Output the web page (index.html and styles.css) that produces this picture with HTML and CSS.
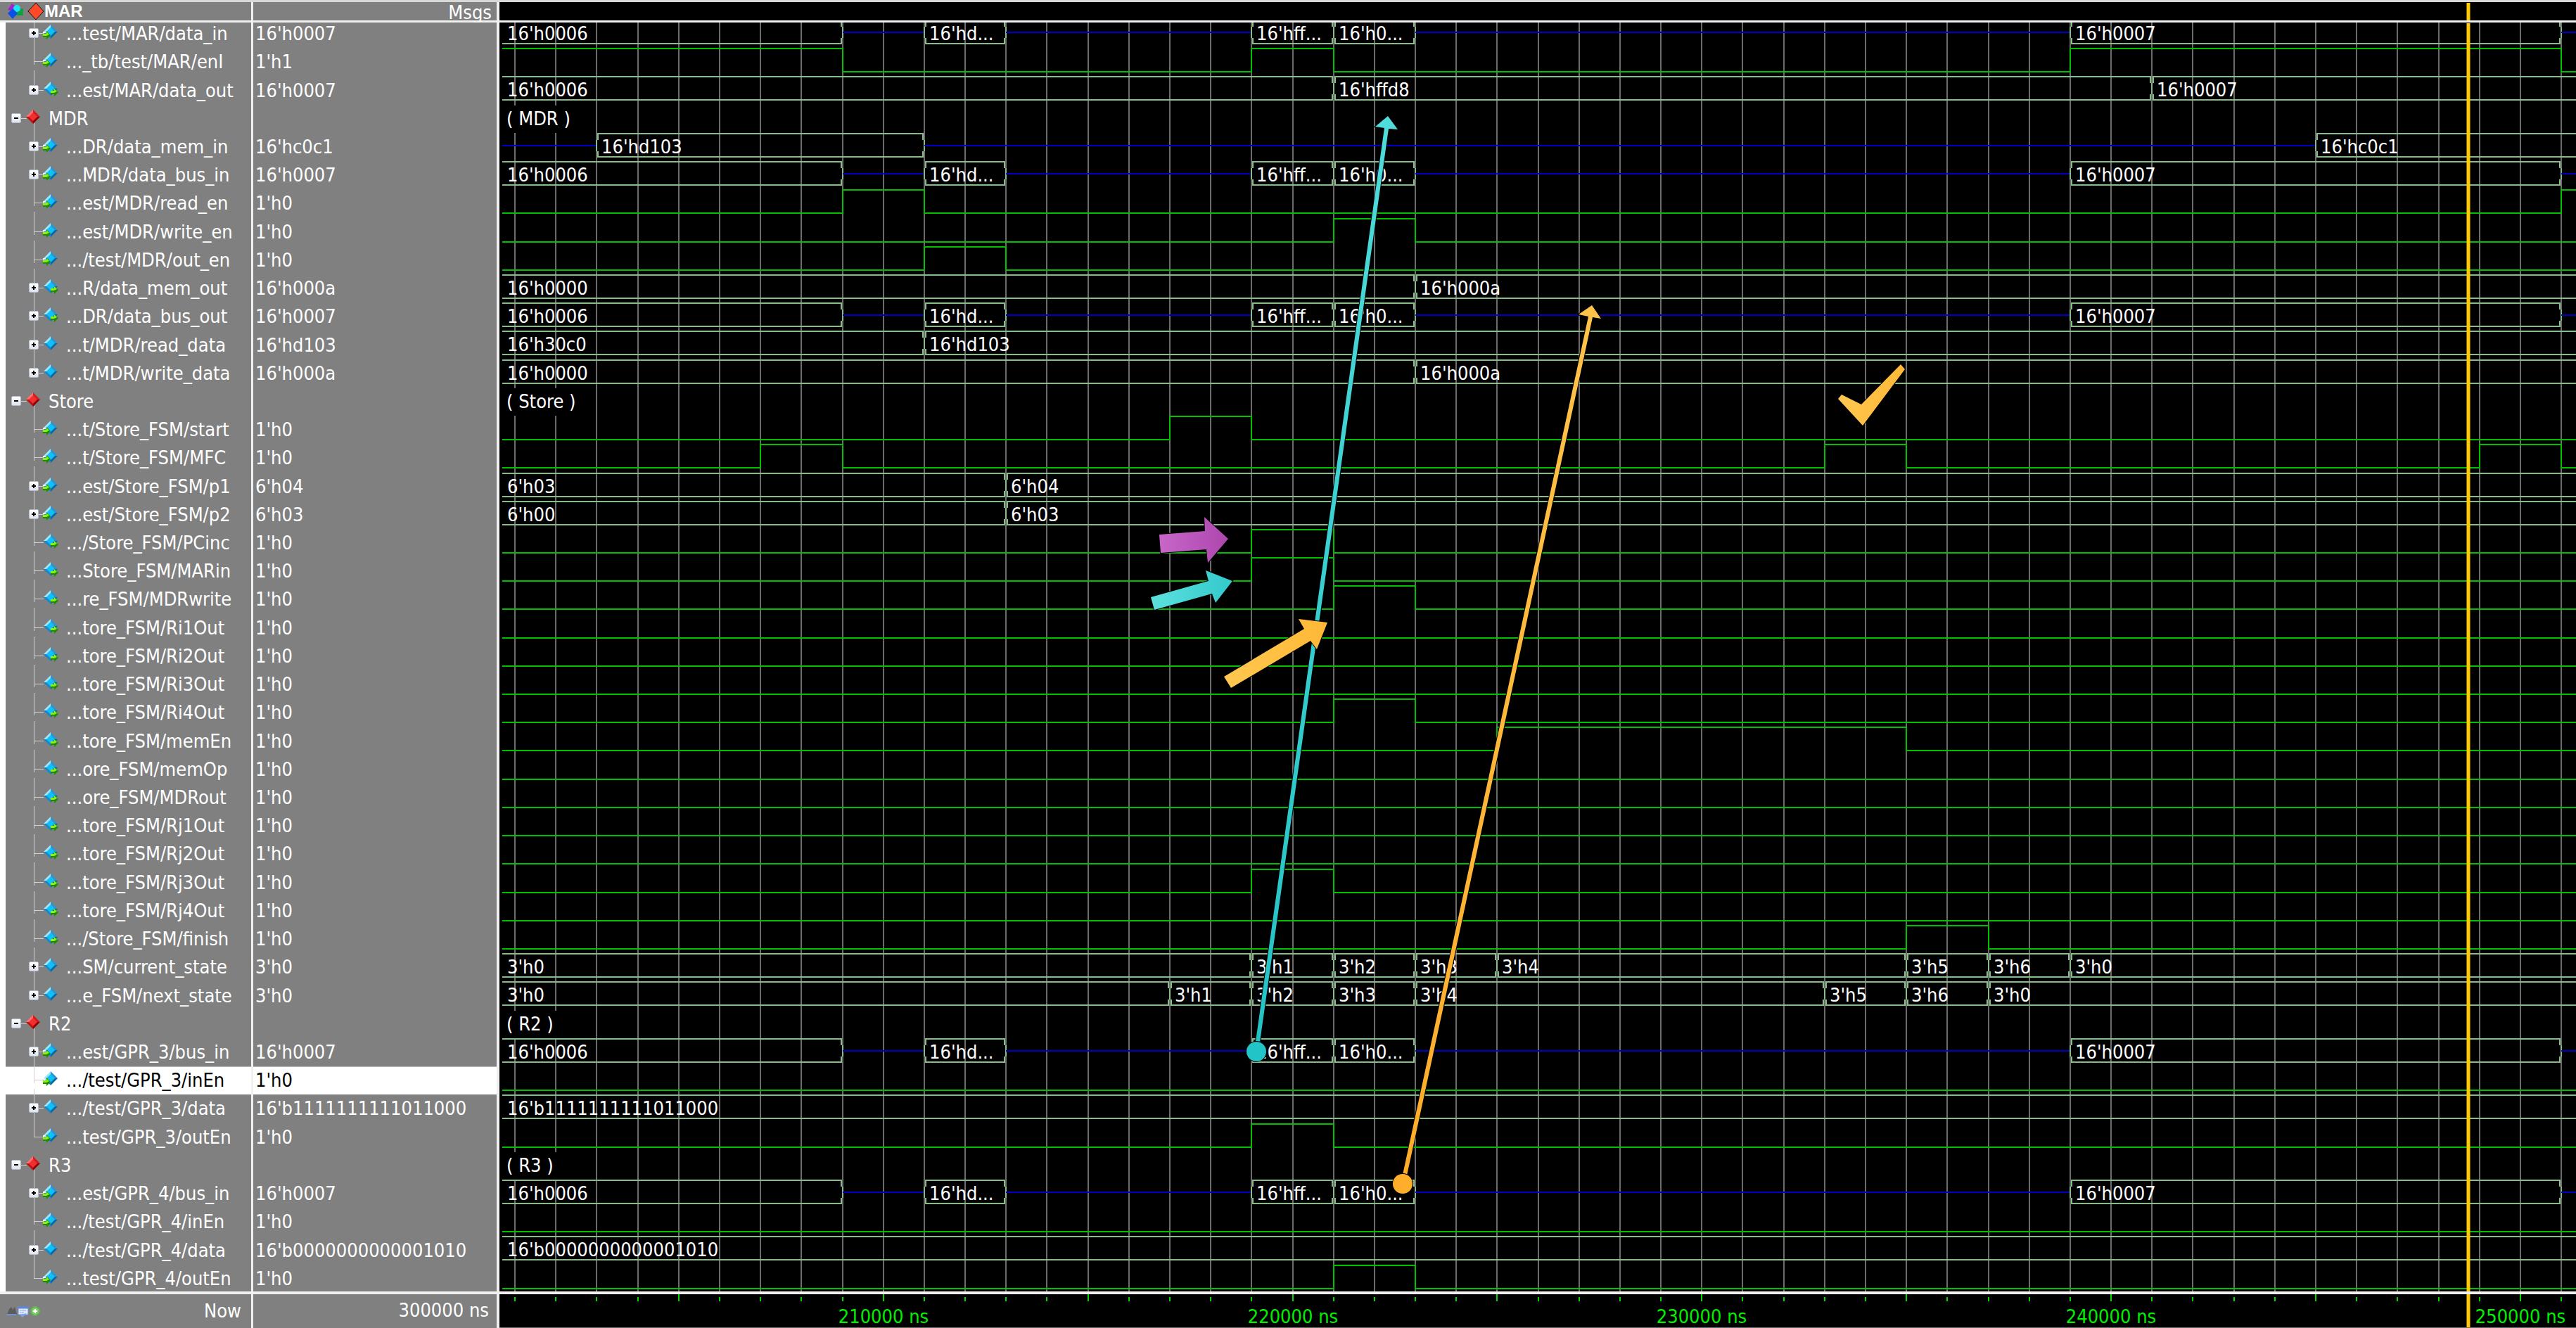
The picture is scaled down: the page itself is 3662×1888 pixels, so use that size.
FILE: index.html
```html
<!DOCTYPE html>
<html lang="en">
<head>
<meta charset="utf-8">
<title>Wave</title>
<link rel="stylesheet" href="styles.css">
</head>
<body>
<main class="wave">
  <header class="bar bar-top">
    <div class="col-name title">
      <svg class="title-icons" width="54" height="26" viewBox="0 0 54 26" aria-hidden="true">
        <path d="M2 11 8 2l8 6-5 5z" fill="#a81ed0"/>
        <path d="M15 9h9v10H14z" fill="#12a047"/>
        <circle cx="15" cy="9" r="5" fill="#19e4f4"/>
        <path d="m9 9 7 7-7 8-7-8z" fill="#0a50e6"/>
        <path d="m30 13 6-3v6z" fill="#1a1a1a"/>
        <path d="m42 1 11 12-11 12-11-12z" fill="#ff4a28" stroke="#111" stroke-width="1"/>
      </svg>
      <h1 class="title-text">MAR</h1>
    </div>
    <div class="col-value head-value">Msgs</div>
    <svg class="col-wave" id="top-strip" aria-hidden="true"></svg>
  </header>

  <section class="panes">
    <table class="signals" aria-label="Signals">
      <tbody id="signal-rows"></tbody>
    </table>
    <svg class="col-wave" id="plot" role="img" aria-label="Waveforms"></svg>
  </section>

  <footer class="bar bar-bottom">
    <div class="col-name now">
      <svg width="50" height="18" viewBox="0 0 50 18" aria-hidden="true">
        <path d="m1 14 3-8 3-3 2 4 3-4 3 11z" fill="#5c5c5c"/>
        <path d="M1 14h13" stroke="#6d93cf" stroke-width="2"/>
        <rect x="17" y="3" width="14" height="11" fill="#dfe8f8" stroke="#6a93dc"/>
        <path d="M17 4h14" stroke="#5b87d8" stroke-width="3"/>
        <path d="M19 8h9M19 11h6" stroke="#8ea9d8"/>
        <path d="m19 14 4 4 6-6z" fill="#7da3e6"/>
        <circle cx="41" cy="9" r="7" fill="#62b34f"/>
        <circle cx="41" cy="9" r="5" fill="#86cc74"/>
        <path d="M41 6v6M38 9h6" stroke="#fff" stroke-width="2"/>
      </svg>
      <span>Now</span>
    </div>
    <div class="col-value now-value">300000 ns</div>
    <svg class="col-wave" id="timeline" aria-label="Timeline"></svg>
  </footer>
</main>
<script src="wave.js"></script>
</body>
</html>
```

FILE: styles.css
```css
* { box-sizing: border-box; }

:root {
  --name-width: 360px;
  --value-width: 350px;
  --panel: #808080;
  --rule: #f0f0f0;
}

body {
  margin: 0;
  background: #000;
  color: #fff;
  font-family: "DejaVu Sans Condensed", "Noto Sans", sans-serif;
  font-size: 27px;
  line-height: 40px;
}

.wave {
  display: flex;
  flex-direction: column;
  height: 100vh;
}

.bar { display: flex; flex: none; background: #000; }
.bar-top {
  height: 32px;
  border-top: 3px solid #d8d8d8;
  border-bottom: 3px solid var(--rule);
}
.bar-bottom {
  height: 52px;
  border-top: 4px solid var(--rule);
}

.col-name,
.col-value { flex: none; background: var(--panel); }
.col-name { width: var(--name-width); border-right: 3px solid var(--rule); }
.col-value { width: var(--value-width); border-right: 4px solid var(--rule); }
.col-wave { display: block; flex: 1; min-width: 0; height: 100%; }

.title { display: flex; align-items: center; padding-left: 9px; }
.title-text {
  margin: 0;
  font: bold 24px/24px "Liberation Sans", sans-serif;
}
.head-value {
  padding-right: 7px;
  text-align: right;
  line-height: 30px;
}

.panes { position: relative; display: flex; flex: 1; min-height: 0; overflow: hidden; }

.signals {
  flex: none;
  width: calc(var(--name-width) + var(--value-width));
  height: calc(100% + 6px);
  margin-top: -4px;
  table-layout: fixed;
  border-collapse: separate;
  border-spacing: 0;
  background: var(--panel);
}
.signals th,
.signals td { padding: 0; text-align: left; font-weight: normal; white-space: nowrap; }
.signals th {
  width: var(--name-width);
  border-left: 8px solid #fff;
  border-right: 3px solid var(--rule);
}
.signals td { padding-left: 3px; border-right: 4px solid var(--rule); }
.signals .selected { background: #fff; color: #000; }
.signals .selected th,
.signals .selected td { box-shadow: inset 0 1px #b8b8b8; }

.node { display: grid; grid-template-columns: 86px 1fr; height: 40px; }
.node-group { grid-template-columns: 61px 1fr; }
.tree { grid-area: 1 / 1; display: block; overflow: visible; }
.label { grid-area: 1 / 2; }

.toggle {
  grid-area: 1 / 1;
  display: grid;
  place-items: center;
  width: 14px;
  height: 14px;
  margin: 12px 0 0 33px;
  padding: 0;
  border: 1px solid #b4bccb;
  border-radius: 2px;
  background: linear-gradient(#fff, #dfe3ee);
}
.node-group .toggle { margin-left: 8px; }

.branch { stroke: #d0d0d0; stroke-width: 1; fill: none; shape-rendering: crispEdges; }

.now {
  display: flex;
  align-items: center;
  justify-content: space-between;
  padding: 0 14px 0 9px;
}
.now-value { padding-right: 11px; text-align: right; line-height: 46px; }

.gridline { stroke: #6c6c6c; stroke-width: 2; }
.bit { stroke: #00c000; stroke-width: 2; fill: none; }
.bus { stroke: #88bc88; stroke-width: 2; fill: none; }
.floating { stroke: #0000c4; stroke-width: 2; }
.cursor { stroke: #ffc800; stroke-width: 5; }
.tick { stroke: #00d800; stroke-width: 2; }
.value-text { fill: #fff; }
.mask { fill: #000; }
.time-text { fill: #00f000; text-anchor: middle; }
.note { stroke: #000; stroke-width: 2; paint-order: stroke; }
```

FILE: wave.js
```js
const T_START = 200.62;
const T_END = 251.36;
const CURSOR = 248.73;
const DATA_BUS = [
  [200, "16'h0006"], [209, null], [211, "16'hd..."], [213, null],
  [219, "16'hff..."], [221, "16'h0..."], [223, null], [239, "16'h0007"], [251, null],
];

// Each bit lists its toggle times; it begins low unless `high` is set.
const group = (name) => ({ kind: "group", name });
const bit = (name, value, port, toggles = [], high = false) =>
  ({ kind: "bit", name, value, port, toggles, high });
const bus = (name, value, port, spans) => ({ kind: "bus", name, value, port, spans });

const rows = [
  bus("...test/MAR/data_in", "16'h0007", "in", DATA_BUS),
  bit("..._tb/test/MAR/enI", "1'h1", "in", [209, 219, 221, 239, 251], true),
  bus("...est/MAR/data_out", "16'h0007", "out", [[200, "16'h0006"], [221, "16'hffd8"], [241, "16'h0007"]]),
  group("MDR"),
  bus("...DR/data_mem_in", "16'hc0c1", "in", [[200, null], [203, "16'hd103"], [211, null], [245, "16'hc0c1"]]),
  bus("...MDR/data_bus_in", "16'h0007", "in", DATA_BUS),
  bit("...est/MDR/read_en", "1'h0", "in", [209, 211, 251]),
  bit("...est/MDR/write_en", "1'h0", "in", [221, 223]),
  bit(".../test/MDR/out_en", "1'h0", "in", [211, 213]),
  bus("...R/data_mem_out", "16'h000a", "out", [[200, "16'h0000"], [223, "16'h000a"]]),
  bus("...DR/data_bus_out", "16'h0007", "out", DATA_BUS),
  bus("...t/MDR/read_data", "16'hd103", "", [[200, "16'h30c0"], [211, "16'hd103"]]),
  bus("...t/MDR/write_data", "16'h000a", "", [[200, "16'h0000"], [223, "16'h000a"]]),
  group("Store"),
  bit("...t/Store_FSM/start", "1'h0", "in", [217, 219]),
  bit("...t/Store_FSM/MFC", "1'h0", "in", [207, 209, 233, 235, 249, 251]),
  bus("...est/Store_FSM/p1", "6'h04", "in", [[200, "6'h03"], [213, "6'h04"]]),
  bus("...est/Store_FSM/p2", "6'h03", "in", [[200, "6'h00"], [213, "6'h03"]]),
  bit(".../Store_FSM/PCinc", "1'h0", "out", [219, 221]),
  bit("...Store_FSM/MARin", "1'h0", "out", [219, 221]),
  bit("...re_FSM/MDRwrite", "1'h0", "out", [221, 223]),
  bit("...tore_FSM/Ri1Out", "1'h0", "out"),
  bit("...tore_FSM/Ri2Out", "1'h0", "out"),
  bit("...tore_FSM/Ri3Out", "1'h0", "out"),
  bit("...tore_FSM/Ri4Out", "1'h0", "out", [221, 223]),
  bit("...tore_FSM/memEn", "1'h0", "out", [225, 235]),
  bit("...ore_FSM/memOp", "1'h0", "out"),
  bit("...ore_FSM/MDRout", "1'h0", "out"),
  bit("...tore_FSM/Rj1Out", "1'h0", "out"),
  bit("...tore_FSM/Rj2Out", "1'h0", "out"),
  bit("...tore_FSM/Rj3Out", "1'h0", "out", [219, 221]),
  bit("...tore_FSM/Rj4Out", "1'h0", "out"),
  bit(".../Store_FSM/finish", "1'h0", "out", [235, 237]),
  bus("...SM/current_state", "3'h0", "", [[200, "3'h0"], [219, "3'h1"], [221, "3'h2"], [223, "3'h3"], [225, "3'h4"], [235, "3'h5"], [237, "3'h6"], [239, "3'h0"]]),
  bus("...e_FSM/next_state", "3'h0", "", [[200, "3'h0"], [217, "3'h1"], [219, "3'h2"], [221, "3'h3"], [223, "3'h4"], [233, "3'h5"], [235, "3'h6"], [237, "3'h0"]]),
  group("R2"),
  bus("...est/GPR_3/bus_in", "16'h0007", "in", DATA_BUS),
  { ...bit(".../test/GPR_3/inEn", "1'h0", "in"), selected: true },
  bus(".../test/GPR_3/data", "16'b1111111111011000", "", [[200, "16'b1111111111011000"]]),
  bit("...test/GPR_3/outEn", "1'h0", "in", [219, 221]),
  group("R3"),
  bus("...est/GPR_4/bus_in", "16'h0007", "in", DATA_BUS),
  bit(".../test/GPR_4/inEn", "1'h0", "in"),
  bus(".../test/GPR_4/data", "16'b0000000000001010", "", [[200, "16'b0000000000001010"]]),
  bit("...test/GPR_4/outEn", "1'h0", "in", [221, 223]),
];

function gem(cx, cy, c) {
  const f = (points, fill) => `<polygon points="${points}" fill="${fill}"/>`;
  return f(`${cx},${cy - 10} ${cx - 10},${cy} ${cx - 5},${cy} ${cx},${cy - 5}`, c[0]) +
    f(`${cx},${cy - 10} ${cx + 10},${cy} ${cx + 5},${cy} ${cx},${cy - 5}`, c[1]) +
    f(`${cx},${cy + 10} ${cx + 10},${cy} ${cx + 5},${cy} ${cx},${cy + 5}`, c[2]) +
    f(`${cx},${cy + 10} ${cx - 10},${cy} ${cx - 5},${cy} ${cx},${cy + 5}`, c[3]) +
    f(`${cx},${cy - 6} ${cx + 6},${cy} ${cx},${cy + 6} ${cx - 6},${cy}`, c[4]);
}

function portArrow(port) {
  if (!port) return "";
  const x = port === "in" ? 53 : 64;
  return `<path d="M${x} 20h5v-4l6 6-6 6v-3h-5z" fill="#1c8c00"/>` +
    `<path d="M${x} 20h5v-3l4 4-4 2h-5z" fill="#8ef010"/>` +
    (port === "in" ? `<path d="M${x} 17h4v2h-4z" fill="#e8f8ff"/>` : "");
}

function tree(row, last) {
  if (row.kind === "group") {
    return `<svg class="tree" width="61" height="40" aria-hidden="true">
      <path class="branch" d="M22 19.5H30M40.5 26V41"/>${gem(39, 17, ["#ff7070", "#d81818", "#8c0000", "#c01010", "#f03030"])}</svg>`;
  }
  let d = "M40 19.5H54";
  if (last) d += "M40.5 0V20";
  else if (row.kind === "bus") d += "M40.5 0V41";
  else d += "M40.5 0V24M40.5 32V41";
  return `<svg class="tree" width="86" height="40" aria-hidden="true">
    <path class="branch" d="${d}"/>${gem(64, 17, ["#a4e4fa", "#2a96d0", "#0868a4", "#1488c8", "#10c0fa"])}${portArrow(row.port)}</svg>`;
}

function toggle(row) {
  if (row.kind === "bit") return "";
  const d = row.kind === "group" ? "M2 5H8" : "M2 5H8M5 2V8";
  const label = row.kind === "group" ? "Collapse" : "Expand";
  return `<button class="toggle" type="button" aria-label="${label} ${row.name}">
    <svg width="10" height="10" aria-hidden="true"><path d="${d}" stroke="#000" stroke-width="2"/></svg></button>`;
}

const tbody = document.getElementById("signal-rows");
tbody.innerHTML = rows.map((row, i) => {
  const last = !rows[i + 1] || rows[i + 1].kind === "group";
  return `<tr class="${row.selected ? "selected" : ""}">
    <th scope="row"><div class="node ${row.kind === "group" ? "node-group" : ""}">
      ${tree(row, last)}${toggle(row)}<span class="label">${row.name}</span></div></th>
    <td>${row.value || ""}</td></tr>`;
}).join("");

const plot = document.getElementById("plot");
const strip = document.getElementById("top-strip");
const timeline = document.getElementById("timeline");
const LEFT = 4;

function busPath(a, b, y, openLeft, openRight) {
  const top = y + 1, bottom = y + 34;
  let d = `M${openLeft ? a : a + 2} ${top}H${openRight ? b : b - 2}`;
  d += `M${openLeft ? a : a + 2} ${bottom}H${openRight ? b : b - 2}`;
  if (!openLeft) d += `M${a + 2} ${top - 1}V${top + 9}M${a} ${top + 9}V${bottom - 8}M${a + 2} ${bottom - 8}V${bottom + 1}`;
  if (!openRight) d += `M${b - 2} ${top - 1}V${top + 9}M${b} ${top + 9}V${bottom - 8}M${b - 2} ${bottom - 8}V${bottom + 1}`;
  return d;
}

function drawRow(row, y, x, width) {
  if (row.kind === "group") return "";
  if (row.kind === "bit") {
    let high = row.high;
    let d = `M${LEFT} ${y + (high ? 1 : 34)}`;
    row.toggles.forEach((t) => {
      high = !high;
      d += `H${x(t)}V${y + (high ? 1 : 34)}`;
    });
    return `<path class="bit" d="${d}H${width}"/>`;
  }
  return row.spans.map(([t, value], i) => {
    const next = row.spans[i + 1];
    const a = i ? x(t) : LEFT;
    const b = next ? x(next[0]) : width;
    if (value === null) return `<path class="floating" d="M${a} ${y + 18}H${b}"/>`;
    return `<path class="bus" d="${busPath(a, b, y, i === 0, !next)}"/>` +
      `<text class="value-text" x="${a + 7}" y="${y + 29}">${value}</text>`;
  }).join("");
}

// Pointers and marks, on a 2952 x 1804 sheet stretched over the plot.
function notes(w, h) {
  return `<defs>
    <linearGradient id="cyan-line" x1="0" y1="1" x2="0" y2="0"><stop offset="0" stop-color="#22c2c5"/><stop offset="1" stop-color="#4fdcdb"/></linearGradient>
    <linearGradient id="gold-line" x1="0" y1="1" x2="0" y2="0"><stop offset="0" stop-color="#ffac28"/><stop offset="1" stop-color="#ffc34a"/></linearGradient>
    <linearGradient id="violet"><stop offset="0" stop-color="#c866c9"/><stop offset="1" stop-color="#ad47ae"/></linearGradient>
    <linearGradient id="cyan"><stop offset="0" stop-color="#5ce0de"/><stop offset="1" stop-color="#33c9cc"/></linearGradient>
    <linearGradient id="gold"><stop offset="0" stop-color="#ffc850"/><stop offset="1" stop-color="#ffb836"/></linearGradient>
  </defs>
  <g class="note" transform="scale(${w / 2952} ${h / 1804})">
    <path fill="url(#cyan-line)" d="M1073 1463 1258 150 1245 148 1263 133 1277 152 1264 151 1079 1464z"/>
    <circle cx="1076" cy="1463" r="14" fill="#22c4c7"/>
    <path fill="url(#gold-line)" d="M1281 1652 1548 418 1534 415 1553 402 1566 421 1554 419 1287 1653z"/>
    <circle cx="1284" cy="1651" r="14" fill="#ffae2b"/>
    <path fill="url(#violet)" d="M938 728 1003 723 1002 703 1036 734 1007 768 1005 749 940 754z"/>
    <path fill="url(#cyan)" d="M926 817 1008 794 1004 779 1042 794 1018 825 1013 812 931 835z"/>
    <path fill="url(#gold)" d="M1030 930 1144 862 1136 848 1177 853 1162 891 1153 879 1040 946z"/>
    <path fill="url(#gold)" d="M1908 529 1936 543 1992 486 1998 493 1938 573 1903 535z"/>
  </g>`;
}

function draw() {
  const box = plot.getBoundingClientRect();
  const w = box.width, h = box.height;
  const x = (t) => Math.round((t - T_START) / (T_END - T_START) * w);
  const lines = [...tbody.rows];
  const cx = x(CURSOR);
  let grid = "", waves = "", masks = "", ticks = "";

  for (let t = Math.ceil(T_START); t <= T_END; t++) {
    grid += `<path class="gridline" d="M${x(t)} 0V${h}"/>`;
    ticks += `<path class="tick" d="M${x(t)} ${t % 5 ? 4 : 0}V10"/>`;
    if (t % 10 === 0) ticks += `<text class="time-text" x="${x(t)}" y="41">${t}000 ns</text>`;
  }
  rows.forEach((row, i) => {
    const y = Math.round(lines[i].getBoundingClientRect().top - box.top);
    waves += drawRow(row, y, x, w);
    if (row.kind === "group") {
      masks += `<rect class="mask" x="4" y="${y + 1}" width="106" height="39"/>`;
      waves += `<text class="value-text" x="10" y="${y + 29}">( ${row.name} )</text>`;
    }
  });
  plot.innerHTML = grid + masks + waves + `<path class="cursor" d="M${cx} 1V${h}"/>` + notes(w, h);
  timeline.innerHTML = ticks + `<path class="cursor" d="M${cx} 0V48"/><path class="gridline" d="M0 48H${w}"/>`;
  strip.innerHTML = `<path class="cursor" d="M${cx} 1V26"/>`;
}

draw();
window.addEventListener("resize", draw);
```
